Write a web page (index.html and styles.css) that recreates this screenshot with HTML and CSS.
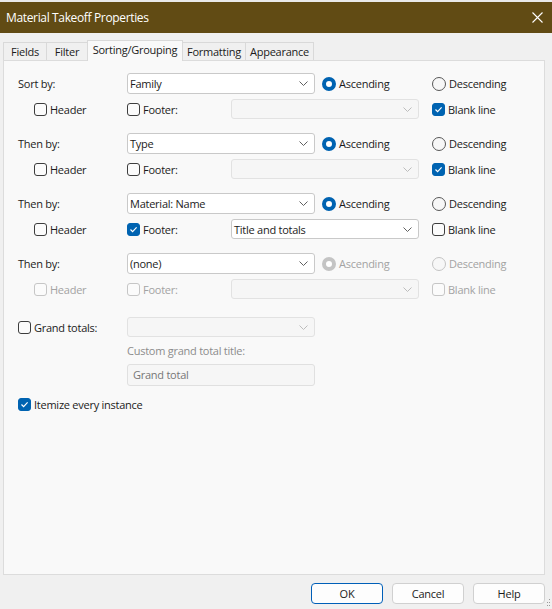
FILE: index.html
```html
<!DOCTYPE html>
<html lang="en">
  <head>
    <meta charset="UTF-8" />
    <title>Material Takeoff Properties</title>
    <link rel="stylesheet" href="styles.css">
  </head>
  <body>
    <div class="topstrip"></div>
    <div class="titlebar">
      <span class="title">Material Takeoff Properties</span>
      <svg class="close" width="11" height="11" viewBox="0 0 11 11">
        <path d="M0.5 0.5 L10.5 10.5 M10.5 0.5 L0.5 10.5" stroke="#fff" stroke-width="1.1" fill="none" />
      </svg>
    </div>

    <div class="tabs">
      <div class="tab t-fields">Fields</div>
      <div class="tab t-filter">Filter</div>
      <div class="tab t-sort active">Sorting/Grouping</div>
      <div class="tab t-format">Formatting</div>
      <div class="tab t-appear">Appearance</div>
    </div>

    <div class="panel">
      <!-- sort level 1 -->
      <div class="group">
        <div class="row main">
          <span class="label">Sort by:</span>
          <div class="select"><span>Family</span><svg class="chev" width="9" height="5" viewBox="0 0 9 5"><path d="M0.5 0.5 L4.5 4.5 L8.5 0.5" /></svg></div>
          <div class="radio asc on"><span class="dot"></span>Ascending</div>
          <div class="radio"><span class="dot"></span>Descending</div>
        </div>
        <div class="row sub">
          <div class="check header"><span class="box"></span>Header</div>
          <div class="check footer"><span class="box"></span>Footer:</div>
          <div class="select small disabled"><span></span><svg class="chev" width="9" height="5" viewBox="0 0 9 5"><path d="M0.5 0.5 L4.5 4.5 L8.5 0.5" /></svg></div>
          <div class="check blank on"><span class="box"><svg width="11" height="11" viewBox="0 0 11 11"><path d="M2.5 5.5 L4.6 7.6 L8.6 3.4" /></svg></span>Blank line</div>
        </div>
      </div>

      <!-- sort level 2 -->
      <div class="group">
        <div class="row main">
          <span class="label">Then by:</span>
          <div class="select"><span>Type</span><svg class="chev" width="9" height="5" viewBox="0 0 9 5"><path d="M0.5 0.5 L4.5 4.5 L8.5 0.5" /></svg></div>
          <div class="radio asc on"><span class="dot"></span>Ascending</div>
          <div class="radio"><span class="dot"></span>Descending</div>
        </div>
        <div class="row sub">
          <div class="check header"><span class="box"></span>Header</div>
          <div class="check footer"><span class="box"></span>Footer:</div>
          <div class="select small disabled"><span></span><svg class="chev" width="9" height="5" viewBox="0 0 9 5"><path d="M0.5 0.5 L4.5 4.5 L8.5 0.5" /></svg></div>
          <div class="check blank on"><span class="box"><svg width="11" height="11" viewBox="0 0 11 11"><path d="M2.5 5.5 L4.6 7.6 L8.6 3.4" /></svg></span>Blank line</div>
        </div>
      </div>

      <!-- sort level 3 -->
      <div class="group">
        <div class="row main">
          <span class="label">Then by:</span>
          <div class="select"><span>Material: Name</span><svg class="chev" width="9" height="5" viewBox="0 0 9 5"><path d="M0.5 0.5 L4.5 4.5 L8.5 0.5" /></svg></div>
          <div class="radio asc on"><span class="dot"></span>Ascending</div>
          <div class="radio"><span class="dot"></span>Descending</div>
        </div>
        <div class="row sub">
          <div class="check header"><span class="box"></span>Header</div>
          <div class="check footer on"><span class="box"><svg width="11" height="11" viewBox="0 0 11 11"><path d="M2.5 5.5 L4.6 7.6 L8.6 3.4" /></svg></span>Footer:</div>
          <div class="select small"><span>Title and totals</span><svg class="chev" width="9" height="5" viewBox="0 0 9 5"><path d="M0.5 0.5 L4.5 4.5 L8.5 0.5" /></svg></div>
          <div class="check blank"><span class="box"></span>Blank line</div>
        </div>
      </div>

      <!-- sort level 4 -->
      <div class="group">
        <div class="row main">
          <span class="label">Then by:</span>
          <div class="select"><span>(none)</span><svg class="chev" width="9" height="5" viewBox="0 0 9 5"><path d="M0.5 0.5 L4.5 4.5 L8.5 0.5" /></svg></div>
          <div class="radio asc on off"><span class="dot"></span>Ascending</div>
          <div class="radio off"><span class="dot"></span>Descending</div>
        </div>
        <div class="row sub">
          <div class="check header off"><span class="box"></span>Header</div>
          <div class="check footer off"><span class="box"></span>Footer:</div>
          <div class="select small disabled"><span></span><svg class="chev" width="9" height="5" viewBox="0 0 9 5"><path d="M0.5 0.5 L4.5 4.5 L8.5 0.5" /></svg></div>
          <div class="check blank off"><span class="box"></span>Blank line</div>
        </div>
      </div>

      <div class="row grand">
        <div class="check grandcheck"><span class="box"></span>Grand totals:</div>
        <div class="select small disabled"><span></span><svg class="chev" width="9" height="5" viewBox="0 0 9 5"><path d="M0.5 0.5 L4.5 4.5 L8.5 0.5" /></svg></div>
      </div>
      <div class="caption">Custom grand total title:</div>
      <div class="textbox">Grand total</div>

      <div class="row itemize">
        <div class="check on"><span class="box"><svg width="11" height="11" viewBox="0 0 11 11"><path d="M2.5 5.5 L4.6 7.6 L8.6 3.4" /></svg></span>Itemize every instance</div>
      </div>
    </div>

    <div class="buttons">
      <button class="btn default">OK</button>
      <button class="btn">Cancel</button>
      <button class="btn">Help</button>
      <svg class="grip" width="4" height="9" viewBox="0 0 4 9">
        <rect x="2" y="0" width="1" height="1" /><rect x="2" y="3" width="1" height="1" /><rect x="2" y="6" width="1" height="1" />
        <rect x="0" y="6" width="1" height="1" /><rect x="0" y="3" width="1" height="1" />
      </svg>
    </div>
  </body>
</html>
```

FILE: styles.css
```css
* {
  margin: 0;
  padding: 0;
  box-sizing: border-box;
}
body {
  width: 552px;
  height: 609px;
  overflow: hidden;
  position: relative;
  background-color: #f0f0f0;
  font-family: "Open Sans", "Noto Sans", sans-serif;
  font-size: 11px;
  letter-spacing: -0.25px;
  color: #1b1b1b;
}
.topstrip {
  height: 2px;
  background-color: #e9e9e9;
}
.titlebar {
  height: 31px;
  background-color: #614b14;
  color: #fff;
  display: flex;
  align-items: center;
  justify-content: space-between;
  padding: 0 9px 0 6px;
  font-size: 12px;
  letter-spacing: -0.35px;
}
.close {
  display: block;
}

/* tabs */
.tabs {
  display: flex;
  align-items: flex-end;
  height: 20px;
  margin-top: 7px;
  padding-left: 3px;
}
.tab {
  height: 18px;
  border: 1px solid #d9d9d9;
  border-bottom: none;
  margin-left: -1px;
  background-color: #f0f0f0;
  text-align: center;
  line-height: 18px;
}
.tab:first-child {
  margin-left: 0;
}
.tab.active {
  height: 21px;
  margin-bottom: -1px;
  background-color: #f9f9f9;
  position: relative;
  z-index: 1;
  line-height: 18px;
}
.t-fields { width: 44px; }
.t-filter { width: 42px; }
.t-sort { width: 96px; }
.t-format { width: 64px; }
.t-appear { width: 69px; }

/* main panel */
.panel {
  height: 515px;
  margin: 0 7px 0 3px;
  border: 1px solid #dcdcdc;
  background-color: #f9f9f9;
  padding: 12px 14px;
}
.group + .group {
  margin-top: 14px;
}
.row {
  display: flex;
  align-items: center;
}
.row.main {
  height: 21px;
}
.row.sub {
  height: 20px;
  margin-top: 5px;
  padding-left: 16px;
}
.label {
  width: 109px;
}

/* dropdowns */
.select {
  width: 188px;
  height: 21px;
  border: 1px solid #c9c9c9;
  border-radius: 3px;
  background-color: #fff;
  display: flex;
  align-items: center;
  justify-content: space-between;
  padding: 0 6px 0 2px;
}
.select.small {
  height: 20px;
}
.chev {
  display: block;
}
.chev path {
  fill: none;
  stroke: #606060;
  stroke-width: 1;
}
.select.disabled {
  background-color: #f6f6f6;
  border-color: #e2e2e2;
}
.select.disabled .chev path {
  stroke: #bcbcbc;
}

/* checkboxes and radios */
.check,
.radio {
  display: flex;
  align-items: center;
  gap: 3px;
}
.box {
  width: 13px;
  height: 13px;
  border: 1px solid #3d3d3d;
  border-radius: 3px;
  background-color: #fbfbfb;
  display: flex;
  align-items: center;
  justify-content: center;
}
.box svg path {
  fill: none;
  stroke: #fff;
  stroke-width: 1.2;
}
.check.on .box {
  background-color: #0063b1;
  border-color: #0063b1;
}
.check.off {
  color: #a3a3a3;
}
.check.off .box {
  border-color: #c6c6c6;
}
.dot {
  width: 14px;
  height: 14px;
  border: 1px solid #575757;
  border-radius: 50%;
  background-color: #f7f7f7;
}
.radio.on .dot {
  border: 4px solid #0063b1;
  background-color: #fff;
}
.radio.off {
  color: #a3a3a3;
}
.radio.off .dot {
  border-color: #c4c4c4;
}
.radio.on.off .dot {
  border-color: #c4c4c4;
}
.radio.asc {
  width: 110px;
  margin-left: 7px;
}
.check.header {
  width: 93px;
}
.check.footer {
  width: 104px;
}
.check.blank {
  margin-left: 13px;
}

/* grand totals */
.row.grand {
  height: 20px;
  margin-top: 18px;
}
.grandcheck {
  width: 109px;
}
.caption {
  margin: 6px 0 0 109px;
  line-height: 15px;
  color: #8c8c8c;
}
.textbox {
  width: 188px;
  height: 22px;
  margin: 6px 0 0 109px;
  border: 1px solid #e0e0e0;
  border-radius: 3px;
  background-color: #f6f6f6;
  color: #777;
  padding-left: 5px;
  line-height: 20px;
}
.row.itemize {
  height: 16px;
  margin-top: 10px;
}

/* footer buttons */
.buttons {
  display: flex;
  justify-content: flex-end;
  gap: 9px;
  padding: 8px 7px 0 0;
}
.btn {
  width: 72px;
  height: 21px;
  border: 1px solid #d0d0d0;
  border-radius: 4px;
  background-color: #fdfdfd;
  font-family: inherit;
  font-size: 11px;
  letter-spacing: -0.25px;
  color: #1b1b1b;
}
.btn.default {
  border-color: #005fb8;
}
.grip {
  position: absolute;
  right: 1px;
  bottom: 1px;
  fill: #9a9a9a;
}
```
